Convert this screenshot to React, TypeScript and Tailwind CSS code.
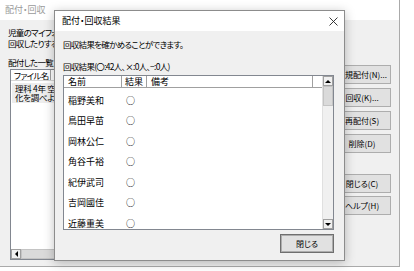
import React from "react";

const students = ["稲野美和", "鳥田早苗", "岡林公仁", "角谷千裕", "紀伊武司", "吉岡國佳", "近藤重美"];

function SideButton({ label }: { label: string }) {
  return (
    <div className="h-[19px] w-[58px] flex items-center justify-center bg-[#e1e1e1] border border-[#adadad] text-[8px] leading-none whitespace-nowrap">
      {label}
    </div>
  );
}

function Arrow({ dir }: { dir: "up" | "down" | "left" }) {
  const cls =
    dir === "up"
      ? "border-l-[3px] border-r-[3px] border-b-[3px] border-l-transparent border-r-transparent border-b-black"
      : dir === "down"
      ? "border-l-[3px] border-r-[3px] border-t-[3px] border-l-transparent border-r-transparent border-t-black"
      : "border-t-[3px] border-b-[3px] border-r-[3px] border-t-transparent border-b-transparent border-r-black";
  return (
    <div className="w-[10px] h-[10px] flex items-center justify-center bg-[#f0f0f0] border border-[#a0a0a0]">
      <div className={`w-0 h-0 ${cls}`}></div>
    </div>
  );
}

export default function App() {
  return (
    <div className="w-[414px] h-[271px] bg-white relative overflow-hidden text-black font-['Noto_Sans_CJK_JP',sans-serif] [font-feature-settings:'palt']">
      {/* background window */}
      <div className="w-[400px] h-[267px] bg-[#f0f0f0] border-r border-b border-[#aaaaaa] flex flex-col">
        <div className="h-[20px] shrink-0 bg-white flex items-center px-[5px] text-[9px] text-[#9a9a9a]">
          配付・回収
        </div>
        <div className="flex flex-1 pl-[8px] pr-[8px] pb-[6px] gap-[6px]">
          <div className="flex flex-col flex-1 text-[8.5px] leading-[11px] tracking-[-0.7px] pt-[7px]">
            <p>児童のマイフォルダーにファイルを配付したり、</p>
            <p>回収したりすることができます。</p>
            <p className="mt-[8px]">配付した一覧</p>
            <div className="mt-[1px] ml-[2px] flex-1 flex flex-col bg-white border border-[#828790]">
              <div className="flex h-[11px] border-b border-[#d5d5d5] leading-[11px]">
                <div className="w-[40px] pl-[3px] border-r border-[#a0a0a0] whitespace-nowrap">ファイル名</div>
              </div>
              <div className="mt-[2px] mx-[1px] bg-[#ededed] pl-[3px] py-[1px] leading-[9px] tracking-[-0.3px]">
                <p className="whitespace-pre">理科 4年 空気の温度と体積の変</p>
                <p className="whitespace-nowrap">化を調べよう</p>
              </div>
              <div className="flex-1"></div>
              <div className="flex h-[10px] bg-[#f0f0f0]">
                <Arrow dir="left" />
                <div className="flex-1 bg-[#dadada] border border-[#c4c4c4]"></div>
              </div>
            </div>
          </div>
          <div className="w-[58px] flex flex-col pt-[45px]">
            <div className="flex flex-col gap-[4px]">
              <SideButton label="新規配付(N)..." />
              <SideButton label="回収(K)..." />
              <SideButton label="再配付(S)" />
              <SideButton label="削除(D)" />
            </div>
            <div className="flex flex-col gap-[3px] mt-[21px]">
              <SideButton label="閉じる(C)" />
              <SideButton label="ヘルプ(H)" />
            </div>
          </div>
        </div>
      </div>

      {/* modal dialog */}
      <div className="absolute left-[54px] top-[10px] w-[291px] h-[251px] bg-[#f0f0f0] border border-[#8c8c8c] shadow-[0_2px_10px_rgba(0,0,0,0.25)] flex flex-col">
        <div className="h-[20px] shrink-0 bg-white flex items-center justify-between pl-[7px] pr-[6px] text-[9px]">
          <span>配付・回収結果</span>
          <svg width="9" height="9" viewBox="0 0 9 9">
            <path d="M0.5 0.5 L8.5 8.5 M8.5 0.5 L0.5 8.5" stroke="#222" strokeWidth="0.9" fill="none" />
          </svg>
        </div>
        <div className="flex flex-col flex-1 pl-[8px] pr-[10px] pt-[8px] text-[9px] leading-[11px]">
          <p className="text-[8.5px] tracking-[-0.7px]">回収結果を確かめることができます。</p>
          <p className="mt-[11px] text-[8.5px] tracking-[-0.7px]">回収結果(〇:42人、×:0人、−:0人)</p>
          <div className="mt-[3px] h-[155px] flex bg-white border border-[#828790] overflow-hidden">
            <div className="flex-1 flex flex-col">
              <div className="flex h-[12px] shrink-0 border-b border-[#a0a0a0] leading-[11px]">
                <div className="w-[58px] pl-[4px] border-r border-[#a0a0a0]">名前</div>
                <div className="w-[25px] pl-[3px] border-r border-[#a0a0a0]">結果</div>
                <div className="w-[166px] pl-[4px] border-r border-[#a0a0a0]">備考</div>
                <div className="flex-1"></div>
              </div>
              <div className="flex flex-col pt-[2px]">
                {students.map((name) => (
                  <div key={name} className="flex items-center h-[20.5px] shrink-0">
                    <div className="w-[58px] pl-[4px]">{name}</div>
                    <div className="w-[25px] pl-[4px] text-[9px]">○</div>
                  </div>
                ))}
              </div>
            </div>
            <div className="w-[11px] flex flex-col bg-[#f0f0f0] border-l border-[#e0e0e0]">
              <Arrow dir="up" />
              <div className="h-[20px] bg-[#dadada] border border-[#c4c4c4]"></div>
              <div className="flex-1"></div>
              <Arrow dir="down" />
            </div>
          </div>
          <div className="flex justify-end mt-[4px]">
            <div className="w-[54px] h-[19px] flex items-center justify-center bg-[#e1e1e1] border border-[#6f6f6f] outline outline-1 -outline-offset-2 outline-[#adadad] text-[8px] leading-none">
              閉じる
            </div>
          </div>
        </div>
      </div>
    </div>
  );
}
